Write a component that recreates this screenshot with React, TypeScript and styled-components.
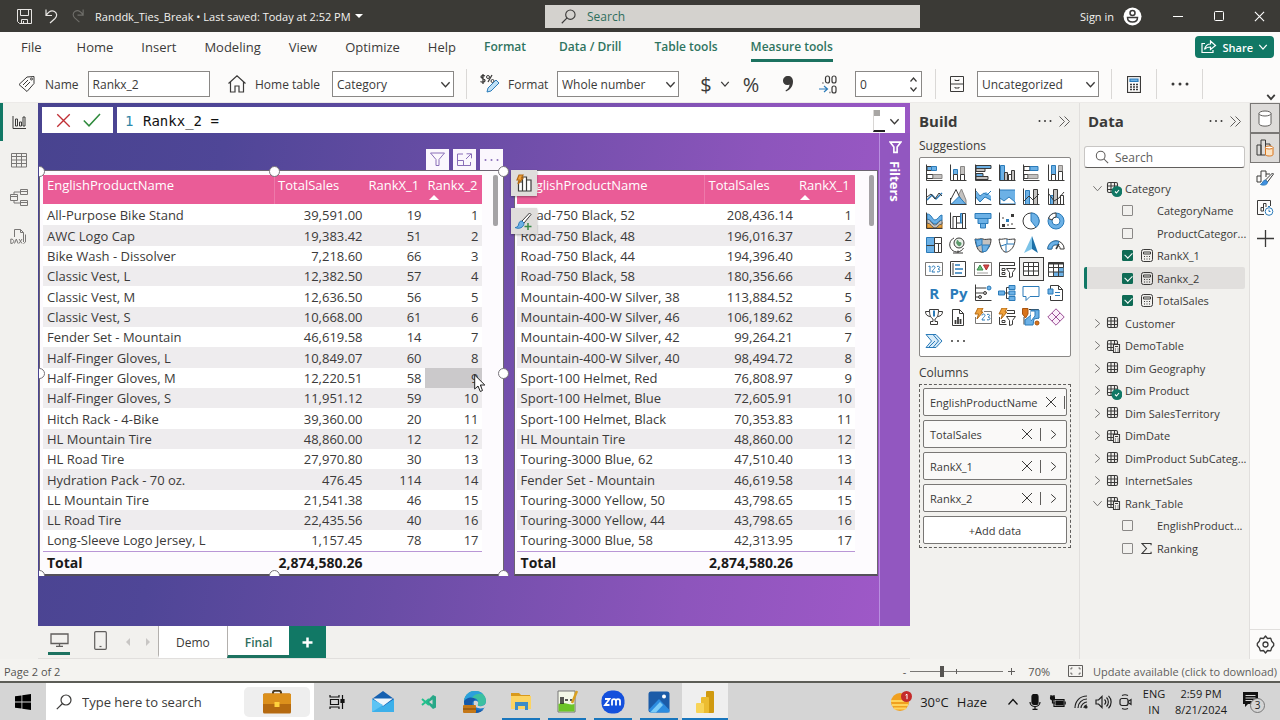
import React from "react";
import styled, { createGlobalStyle, css } from "styled-components";

const INK = "#3b3a39";
const BLUE = "#6cb1e6";
const DEEP = "#2b7bb9";
const GREY = "#c4c2c0";
const GREEN = "#117865";

const Global = createGlobalStyle`
  * { box-sizing: border-box; }
  body { margin: 0; background: #f2f1ee; font-family: "Open Sans", "Noto Sans", sans-serif; font-size: 12px; color: #3b3a39; }
  button, input, select { font: inherit; color: inherit; margin: 0; }
  button { border: 0; background: none; padding: 0; }
  svg { display: block; flex: none; }
`;

const Shell = styled.div`
  display: flex;
  flex-direction: column;
  min-height: 100vh;
  overflow: hidden;
`;

const Row = styled.div`
  display: flex;
  align-items: center;
`;

/* ---------- Title bar ---------- */

const TitleBar = styled.header`
  display: grid;
  grid-template-columns: 545fr 375fr 360fr;
  align-items: center;
  height: 32px;
  background: #3b3a36;
  color: #f3f2f0;
`;

const TitleLeft = styled(Row)`
  padding-left: 16px;
`;

const FileTitle = styled.span`
  margin-left: 9px;
  padding-top: 1px;
  font-size: 11px;
  white-space: nowrap;
`;

const TitleSearch = styled.label`
  display: flex;
  align-items: center;
  gap: 11px;
  height: 23px;
  padding-left: 16px;
  background: #d4d2ce;
  color: #2f6e5c;
  input {
    flex: 1;
    min-width: 0;
    border: 0;
    padding: 0;
    background: none;
    outline: 0;
    font-size: 12px;
  }
  input::placeholder { color: #2f6e5c; opacity: 1; }
`;

const TitleRight = styled(Row)`
  justify-content: flex-end;
`;

const SignIn = styled.button`
  display: flex;
  align-items: center;
  gap: 9px;
  margin-right: 15px;
  font-size: 11px;
`;

/* ---------- Ribbon ---------- */

const RibbonTabs = styled.nav`
  display: flex;
  align-items: center;
  height: 30px;
  padding: 0 6px 0 21px;
  background: #fcfbfa;
`;

const Tab = styled.a<{ $accent?: boolean; $active?: boolean }>`
  height: 30px;
  margin-right: ${(p) => (p.$accent ? 33 : 28)}px;
  padding-top: 6px;
  line-height: 18px;
  font-size: ${(p) => (p.$accent ? 12 : 13)}px;
  color: ${(p) => (p.$accent ? "#2f7460" : INK)};
  font-weight: ${(p) => (p.$accent ? 600 : 400)};
  text-decoration: none;
  white-space: nowrap;
  border-bottom: 3px solid ${(p) => (p.$active ? "#1c7260" : "transparent")};
  &:first-child { margin-right: 35px; }
`;

const ShareButton = styled.button`
  display: flex;
  align-items: center;
  gap: 5px;
  height: 22px;
  margin-left: auto;
  padding: 0 6px;
  border-radius: 4px;
  background: ${GREEN};
  color: #fff;
  font-weight: 600;
  font-size: 11px;
`;

const Ribbon = styled.div`
  display: flex;
  align-items: center;
  height: 41px;
  padding: 4px 4px 0 18px;
  background: #fcfbfa;
  border-bottom: 1px solid #eceae8;
`;

const Group = styled.div<{ $w: number; $indent?: number; $end?: number }>`
  display: flex;
  align-items: center;
  width: ${(p) => p.$w}px;
  padding: 0 ${(p) => p.$end ?? 0}px 0 ${(p) => p.$indent ?? 0}px;
  flex: none;
`;

const FieldLabel = styled.label`
  display: flex;
  align-items: center;
  gap: 9px;
  white-space: nowrap;
  flex: 1;
`;

const boxStyle = css`
  height: 26px;
  border: 1px solid #8a8886;
  border-radius: 0;
  background: #fff;
  padding: 0 4px;
  outline: 0;
`;

const TextBox = styled.input`
  ${boxStyle}
  width: 122px;
`;

const SelectWrap = styled.span`
  display: grid;
  align-items: center;
  width: 122px;
  flex: none;
  select, svg { grid-area: 1 / 1; }
  svg { justify-self: end; margin-right: 3px; pointer-events: none; }
`;

const Select = styled.select`
  ${boxStyle}
  width: 100%;
  appearance: none;
`;

const Spinner = styled.span`
  display: flex;
  align-items: center;
  ${boxStyle}
  width: 67px;
  input { width: 50px; border: 0; padding: 0; background: none; outline: 0; }
`;

const SpinArrows = styled.span`
  display: flex;
  flex-direction: column;
  gap: 5px;
`;

const Divider = styled.i`
  width: 1px;
  height: 30px;
  background: #dad8d6;
  flex: none;
`;

const IconButton = styled.button<{ $w?: number }>`
  display: flex;
  align-items: center;
  justify-content: center;
  width: ${(p) => p.$w ?? 24}px;
  height: 24px;
  flex: none;
`;

const Sign = styled(IconButton)`
  font-size: 20px;
`;

const RibbonToggle = styled.button`
  align-self: flex-end;
  margin-left: auto;
`;

/* ---------- Work area ---------- */

const Work = styled.main`
  display: flex;
  flex: 1;
`;

const ViewRail = styled.nav`
  width: 38px;
  flex: none;
  background: #f2f1ee;
`;

const ViewButton = styled.button<{ $active?: boolean }>`
  display: flex;
  align-items: center;
  justify-content: center;
  width: 38px;
  height: 38px;
  border-left: 3px solid ${(p) => (p.$active ? GREEN : "transparent")};
  border-right: 3px solid transparent;
`;

const Center = styled.section`
  display: flex;
  flex-direction: column;
  flex: 1;
  min-width: 0;
`;

const Stage = styled.div`
  display: flex;
  flex-direction: column;
  flex: 1;
  background: linear-gradient(100deg, #48438f 0%, #4f4697 20%, #6a4da6 46%, #8d55bc 76%, #a159c9 100%);
`;

const FormulaBar = styled.div`
  display: flex;
  gap: 4px;
  padding: 4px 5px 0 4px;
`;

const FormulaActions = styled.div`
  display: flex;
  align-items: center;
  justify-content: center;
  gap: 4px;
  width: 71px;
  height: 26px;
  background: #fff;
`;

const FormulaBox = styled.label`
  display: flex;
  align-items: center;
  flex: 1;
  height: 26px;
  padding: 2px 5px 0 8px;
  background: #fff;
  font-family: "DejaVu Sans Mono", "Liberation Mono", monospace;
  font-size: 14px;
  line-height: 24px;
  color: #111;
  input { flex: 1; height: 24px; line-height: 24px; border: 0; padding: 0; outline: 0; background: none; }
`;

const LineNo = styled.span`
  width: 18px;
  color: #2f87a8;
`;

const MiniMap = styled.span`
  display: flex;
  flex-direction: column;
  justify-content: space-between;
  width: 12px;
  height: 22px;
  margin-right: 4px;
  border-left: 1px solid #d8d6d4;
  border-bottom: 2px solid #222;
  &::before { content: ""; width: 6px; height: 6px; background: #a8a6a4; }
`;

const StageBody = styled.div`
  display: flex;
  flex: 1;
`;

const ReportPage = styled.div`
  display: grid;
  grid-template-columns: 464fr 364fr;
  column-gap: 10px;
  align-content: start;
  flex: 1;
  min-width: 0;
  padding: 0 1px;
`;

const FiltersPane = styled.aside`
  display: flex;
  flex-direction: column;
  align-items: center;
  gap: 7px;
  width: 31px;
  padding-top: 8px;
  border-left: 1px solid #b98fe0;
  background: #9257c0;
  color: #fff;
`;

const VerticalTitle = styled.span`
  writing-mode: vertical-rl;
  font-size: 13px;
  font-weight: 700;
  line-height: 18px;
`;

const VisualColumn = styled.div`
  display: flex;
  flex-direction: column;
  min-width: 0;
`;

const VisualHeader = styled.div`
  display: flex;
  align-items: flex-end;
  justify-content: flex-end;
  gap: 4px;
  height: 37px;
  padding: 0 1px 0 0;
`;

const HeaderButton = styled.button`
  display: flex;
  align-items: center;
  justify-content: center;
  width: 23px;
  height: 21px;
  background: #fbf7fd;
`;

const Visual = styled.div<{ $selected?: boolean }>`
  position: relative;
  display: flex;
  height: 406px;
  padding: 4px ${(p) => (p.$selected ? 5 : 3)}px 0 ${(p) => (p.$selected ? 3 : 2)}px;
  background: #fdfbfe;
  border: 1px solid #6b6470;
  border-bottom: 2px solid #55505a;
`;

const HandleClip = styled.div`
  position: absolute;
  left: -1px;
  right: -7px;
  top: -7px;
  bottom: -2px;
  overflow: hidden;
  pointer-events: none;
`;

const Handle = styled.i<{ $x: string; $y: string }>`
  position: absolute;
  left: ${(p) => p.$x};
  top: ${(p) => p.$y};
  width: 11px;
  height: 11px;
  margin: -5px 0 0 -5px;
  border: 1px solid #77737a;
  border-radius: 50%;
  background: #fff;
`;

const DataTable = styled.table`
  flex: 1;
  min-width: 0;
  border-collapse: collapse;
  table-layout: fixed;
  font-size: 13px;
  align-self: flex-start;
  th, td { padding: 0 3px; line-height: 20px; white-space: nowrap; text-align: right; font-weight: 400; }
  th:first-child, td:first-child { text-align: left; padding-left: 4px; }
  thead tr { height: 29px; background: #ea5c97; color: #fff; }
  thead th { position: relative; vertical-align: top; text-align: left; }
  thead th:nth-child(2) { border-left: 1px solid #ee79aa; }
  tbody tr { height: 20px; background: #fff; }
  tbody tr:first-child td { padding-top: 1px; }
  tbody tr:nth-child(3n + 2) { height: 21px; }
  tbody tr:nth-child(even) { background: #eeecee; }
  tfoot td { height: 24px; border-top: 1px solid #b996d6; font-size: 14px; font-weight: 700; color: #1b1a19; }
`;

const SortMark = styled.i`
  position: absolute;
  left: 4px;
  bottom: 4px;
  border: 5px solid transparent;
  border-top: 0;
  border-bottom-color: #fff;
`;

const Cell = styled.td<{ $hot?: boolean }>`
  ${(p) => p.$hot && css`background: #cbc9cb;`}
`;

const TableScroll = styled.div<{ $w: number }>`
  width: ${(p) => p.$w}px;
  display: flex;
  justify-content: flex-end;
  flex: none;
  &::before { content: ""; width: 5px; height: 51px; border-radius: 2px; background: #a5a3a6; }
`;

const Suggest = styled.div`
  position: absolute;
  left: -4px;
  top: -1px;
  display: flex;
  flex-direction: column;
  gap: 12px;
`;

const SuggestButton = styled.button`
  display: flex;
  align-items: center;
  justify-content: center;
  width: 26px;
  height: 26px;
  background: #dfdddb;
  box-shadow: 0 1px 2px #0005;
`;

const Pointer = styled.svg`
  position: absolute;
  left: 434px;
  top: 203px;
`;

/* ---------- Page tabs ---------- */

const PageTabs = styled.div`
  display: flex;
  height: 33px;
  background: #f2f1ee;
  border-bottom: 1px solid #e1dfdd;
`;

const Devices = styled.div`
  display: flex;
  align-items: flex-start;
  gap: 19px;
  padding: 2px 14px 0 10px;
`;

const Pager = styled.div`
  display: flex;
  align-items: center;
  gap: 14px;
  padding-right: 7px;
`;

const DeviceButton = styled.button<{ $active?: boolean }>`
  display: flex;
  align-items: center;
  justify-content: center;
  width: 22px;
  height: 27px;
  border-bottom: 3px solid ${(p) => (p.$active ? "#1c7260" : "transparent")};
`;

const PageTab = styled.button<{ $active?: boolean }>`
  height: 32px;
  padding: 4px 17px 0;
  background: #fff;
  border-left: 1px solid #b3b0ad;
  border-bottom: 3px solid ${(p) => (p.$active ? "#1c7260" : "#fff")};
  color: ${(p) => (p.$active ? "#2f6e5c" : INK)};
  font-weight: ${(p) => (p.$active ? 600 : 400)};
  font-size: 12px;
`;

const AddPage = styled.button`
  display: flex;
  align-items: center;
  justify-content: center;
  width: 37px;
  height: 32px;
  background: ${GREEN};
`;

/* ---------- Side panels ---------- */

const Panel = styled.aside<{ $pad: string }>`
  width: 170px;
  flex: none;
  padding: ${(p) => p.$pad};
  background: #f2f1ee;
  border-right: 1px solid #e1dfdd;
`;

const PanelHead = styled.div<{ $inset?: boolean }>`
  display: flex;
  align-items: center;
  gap: 5px;
  height: 36px;
  padding: ${(p) => (p.$inset ? "0 3px 0 4px" : "0")};
  h2 { flex: 1; margin: 0; font-size: 15px; font-weight: 700; }
`;

const SectionLabel = styled.h3<{ $spaced?: boolean }>`
  margin: ${(p) => (p.$spaced ? 9 : 0)}px 0 0;
  height: 18px;
  line-height: 14px;
  font-size: 12px;
  font-weight: 400;
`;

const Gallery = styled.div`
  display: grid;
  grid-template-columns: repeat(6, 1fr);
  grid-auto-rows: 24px;
  height: 200px;
  padding: 3px 2px;
  border: 1px solid #8a8886;
  border-radius: 2px;
  background: #fff;
`;

const GalleryButton = styled.button<{ $on?: boolean }>`
  display: flex;
  align-items: center;
  justify-content: center;
  outline: ${(p) => (p.$on ? "1px solid #3b3a39" : "0")};
  outline-offset: -1px;
  background: ${(p) => (p.$on ? "#f0efee" : "none")};
  font-size: 15px;
  font-weight: 700;
  color: ${DEEP};
`;

const Wells = styled.div`
  display: flex;
  flex-direction: column;
  gap: 4px;
  padding: 3px;
  border: 1px dashed #605e5c;
`;

const Well = styled.div`
  display: flex;
  align-items: center;
  gap: 7px;
  height: 28px;
  padding: 0 7px 0 6px;
  border: 1px solid #797775;
  border-radius: 2px;
  background: #faf9f8;
  overflow: hidden;
  font-size: 11px;
  span { flex: 1; white-space: nowrap; }
`;

const WellBar = styled.i`
  width: 1px;
  height: 13px;
  background: #605e5c;
  flex: none;
`;

const AddData = styled.button`
  height: 28px;
  border: 1px solid #797775;
  border-radius: 2px;
  background: #fff;
  font-size: 11px;
  font-weight: 500;
`;

const DataSearch = styled.label`
  display: flex;
  align-items: center;
  gap: 6px;
  height: 22px;
  margin: 7px 0 9px;
  padding: 0 10px;
  border: 1px solid #c8c6c4;
  border-bottom-color: #605e5c;
  border-radius: 3px;
  background: #fff;
  input { flex: 1; min-width: 0; padding: 0; border: 0; outline: 0; background: none; font-size: 12px; }
  input::placeholder { color: #605e5c; opacity: 1; }
`;

const Tree = styled.ul`
  margin: 0;
  padding: 0;
  list-style: none;
  font-size: 11px;
`;

const TreeItem = styled.li<{ $selected?: boolean }>`
  height: 22px;
  border-left: 3px solid ${(p) => (p.$selected ? GREEN : "transparent")};
  border-radius: 2px;
  background: ${(p) => (p.$selected ? "#e1dfdd" : "none")};
  &:nth-child(even) { height: 23px; }
`;

const TableNode = styled.button`
  display: flex;
  align-items: center;
  gap: 3px;
  height: 100%;
  padding-left: 5px;
  white-space: nowrap;
`;

const FieldNode = styled.label`
  display: grid;
  grid-template-columns: 19px 11px 1fr;
  align-items: center;
  height: 100%;
  padding-left: 35px;
  white-space: nowrap;
  span { margin-left: 5px; }
`;

const Check = styled.input`
  appearance: none;
  position: relative;
  width: 11px;
  height: 11px;
  border: 1px solid #8a8886;
  border-radius: 1px;
  &:checked { background: #0f6b55; border-color: #0f6b55; }
  &:checked::after {
    content: "";
    position: absolute;
    left: 2px;
    top: 1px;
    width: 6px;
    height: 4px;
    border: solid #fff;
    border-width: 0 0 1px 1px;
    transform: rotate(-45deg);
  }
`;

const PaneRail = styled.nav`
  display: flex;
  flex-direction: column;
  width: 30px;
  flex: none;
  background: #fcfbfa;
`;

const RailButton = styled.button<{ $on?: boolean; $last?: boolean }>`
  display: flex;
  align-items: center;
  justify-content: center;
  width: 30px;
  height: 30px;
  ${(p) => p.$on && css`background: #dddbd9; border: 1px solid #797775;`}
  ${(p) => p.$last && css`margin-top: auto; border-top: 1px solid #e1dfdd;`}
`;

/* ---------- Status bar ---------- */

const StatusBar = styled.footer`
  display: flex;
  align-items: center;
  height: 24px;
  padding: 2px 3px 0 4px;
  background: #f4f3f0;
  border-bottom: 2px solid #5c5d57;
  font-size: 11px;
  color: #555351;
`;

const Zoom = styled.div`
  display: flex;
  align-items: center;
  gap: 4px;
  margin-left: auto;
`;

const ZoomSlider = styled.input`
  appearance: none;
  width: 93px;
  height: 12px;
  background:
    linear-gradient(#605e5c, #605e5c) center / 1px 5px no-repeat,
    linear-gradient(#797775, #797775) center / 100% 1px no-repeat;
  &::-webkit-slider-thumb { appearance: none; width: 4px; height: 11px; background: #555351; }
`;

const UpdateLink = styled.a`
  margin-left: 10px;
  color: #605e5c;
  text-decoration: none;
`;

const ZoomValue = styled.span`
  margin: 0 18px 0 8px;
`;

/* ---------- Taskbar ---------- */

const Taskbar = styled.footer`
  display: flex;
  height: 37px;
  background: #d5d5d5;
  color: #1b1a19;
`;

const StartButton = styled.button`
  display: flex;
  align-items: center;
  justify-content: center;
  width: 46px;
`;

const TaskSearch = styled.label`
  display: flex;
  align-items: center;
  gap: 10px;
  width: 268px;
  padding: 0 4px 0 10px;
  background: #fff;
  input { flex: 1; min-width: 0; border: 0; padding: 0; outline: 0; font-size: 13px; background: none; }
  input::placeholder { color: #3b3a39; opacity: 1; }
`;

const Highlight = styled.span`
  display: flex;
  align-items: center;
  justify-content: center;
  width: 66px;
  height: 30px;
  border-radius: 5px;
  background: #eeeeee;
`;

const TaskButton = styled.button<{ $run?: boolean; $active?: boolean }>`
  display: flex;
  align-items: center;
  justify-content: center;
  width: 46px;
  background: ${(p) => (p.$active ? "#efefef" : "none")};
  background-clip: padding-box;
  border: solid transparent;
  border-width: 0 4px;
  box-shadow: ${(p) => (p.$run ? "inset 0 -2px #1976bd" : "none")};
  ${(p) => p.$active && css`border-width: 0;`}
`;

const Tray = styled.div`
  display: flex;
  align-items: center;
  margin-left: auto;
  padding-right: 14px;
`;

const Weather = styled.button`
  display: flex;
  align-items: center;
  gap: 8px;
  margin-right: 15px;
  font-size: 13px;
`;

const TrayText = styled.div<{ $w: number }>`
  width: ${(p) => p.$w}px;
  text-align: center;
  font-size: 11px;
  line-height: 16px;
  white-space: nowrap;
`;

const NoticeButton = styled.button`
  margin-left: 11px;
`;

/* ---------- Drawings ---------- */

type GlyphProps = { w?: number; h?: number; box?: string; color?: string; sw?: number; children: React.ReactNode };
const Glyph = ({ w = 18, h = w, box = "0 0 18 18", color = INK, sw = 1, children }: GlyphProps) => (
  <svg width={w} height={h} viewBox={box} fill="none" stroke={color} strokeWidth={sw} aria-hidden="true">
    {children}
  </svg>
);

const Chevron = ({ dir = "down", size = 12, color = INK, sw = 1.3 }: { dir?: "down" | "right" | "up"; size?: number; color?: string; sw?: number }) => (
  <Glyph w={size} box="0 0 12 12" color={color} sw={(sw * 12) / size}>
    <path d={{ down: "M1.5 3.5 6 8.500 10.500 3.500", right: "M3.500 1.500 8.500 6 3.500 10.500", up: "M1.500 8.500 6 3.500 10.500 8.500" }[dir]} />
  </Glyph>
);

const SpinChevron = ({ up }: { up?: boolean }) => (
  <Glyph w={7} h={5} box="0 0 7 5" sw={1.2}>
    <path d={up ? "M.5 4.500 3.500 1l3 3.500" : "M.5.500 3.500 4l3-3.500"} />
  </Glyph>
);

const DoubleChevron = () => (
  <Glyph w={13} box="0 0 13 13" color="#605e5c">
    <path d="M1.5 1.5 6.5 6.5 1.5 11.5M6.5 1.5l5 5-5 5" />
  </Glyph>
);

const Dots = ({ w = 15, color = INK, r = 1 }: { w?: number; color?: string; r?: number }) => (
  <Glyph w={w} h={4} box={`0 0 ${w} 4`} color="none">
    <g fill={color}>
      <circle cx={r + 0.5} cy="2" r={r} />
      <circle cx={w / 2} cy="2" r={r} />
      <circle cx={w - r - 0.5} cy="2" r={r} />
    </g>
  </Glyph>
);

const Cross = ({ size = 12, color = INK, sw = 1.2 }: { size?: number; color?: string; sw?: number }) => (
  <Glyph w={size} box="0 0 12 12" color={color} sw={sw}>
    <path d="m1 1 10 10M11 1 1 11" />
  </Glyph>
);

const Lens = ({ size = 15, color = INK, flip }: { size?: number; color?: string; flip?: boolean }) => (
  <Glyph w={size} box="0 0 16 16" color={color} sw={1.2}>
    {flip ? (
      <>
        <circle cx="6.5" cy="6.5" r="5" />
        <path d="m10 10 5 5" />
      </>
    ) : (
      <>
        <circle cx="10" cy="6" r="5" />
        <path d="M6.5 9.5.8 15.2" />
      </>
    )}
  </Glyph>
);

const axis = <path d="M1.5 .5v16H17.5" />;
const f = (d: string, fill: string, stroke: string = INK) => <path d={d} fill={fill} stroke={stroke} />;

const gallery: { name: string; draw: React.ReactNode; on?: boolean }[] = [
  { name: "Stacked bar chart", draw: <>{f("M2 2.5h4.500v4H2z", BLUE)}{f("M6.500 2.500h5v4h-5z", BLUE, DEEP)}{f("M2 10.500h6v4H2z", "#fff")}{f("M8 10.500h9v4H8z", GREY, "#8a8886")}{axis}</> },
  { name: "Stacked column chart", draw: <>{f("M4.500 5.500h4v5h-4z", BLUE, DEEP)}{f("M4.500 10.500h4v6h-4z", "#fff")}{f("M11.500 2.500h4v8h-4z", GREY, "#8a8886")}{f("M11.500 10.500h4v6h-4z", "#fff")}{axis}</> },
  { name: "Clustered bar chart", draw: <>{f("M2 1.500h15v3H2z", BLUE)}{f("M2 4.500h9v3H2z", GREY)}{f("M2 9.500h7v3H2z", BLUE)}{f("M2 12.500h12v3H2z", GREY)}{axis}</> },
  { name: "Clustered column chart", draw: <>{f("M2.500 1.500h4v15h-4z", BLUE, DEEP)}{f("M6.500 8.500h3v8h-3z", GREY)}{f("M10.500 10.500h3v6h-3z", "#fff")}{f("M13.500 6.500h3v10h-3z", GREY)}{axis}</> },
  { name: "100% stacked bar chart", draw: <>{f("M2 2.500h6v4H2z", "#fff")}{f("M8 2.500h8v4H8z", BLUE, DEEP)}{f("M2 10.500h4v4H2z", "#fff")}{f("M6 10.500h10v4H6z", GREY, "#8a8886")}{axis}</> },
  { name: "100% stacked column chart", draw: <>{f("M4.500 1.500h4v9h-4z", BLUE, DEEP)}{f("M4.500 10.500h4v6h-4z", "#fff")}{f("M11.500 1.500h4v6h-4z", GREY, "#8a8886")}{f("M11.500 7.500h4v9h-4z", "#fff")}{axis}</> },
  { name: "Line chart", draw: <>{axis}<path d="m2 12 5-5 4 4 6-6" stroke={DEEP} strokeWidth="1.500" /><path d="m2 9 4-3 4 5 4-6 3 3" /></> },
  { name: "Area chart", draw: <>{f("M8 10 12.500 1 17 12v4H8z", GREY, "#8a8886")}{f("M1.500 12 7 1.500 12 12v4H1.500z", "#fff")}{f("M2 16.500l8-8 7 8z", BLUE, DEEP)}<path d="M1.500 10v6.500h16" /></> },
  { name: "Stacked area chart", draw: <>{f("M2 4l4 4 6-4 5 4v8H2z", BLUE, "none")}{f("M2 10l4 4 5-5 6 4v3H2z", "#fff", "none")}<path d="m2 3 4 5 4-3 3 2 4-4" stroke={DEEP} /><path d="m2 9 4 5 5-5 6 3" stroke={DEEP} />{axis}</> },
  { name: "100% stacked area chart", draw: <>{f("M2 2h15v14H2z", BLUE, "none")}{f("M2 10l4 3 5-4 6 5v2H2z", "#fff", DEEP)}<path d="M2 2h15" stroke={DEEP} />{axis}</> },
  { name: "Line and stacked column chart", draw: <>{f("M3.500 2.500h4v14h-4z", BLUE, DEEP)}{f("M11.500 1.500h4v15h-4z", GREY)}<path d="m2 13 5-5 4 4 6-6" />{axis}</> },
  { name: "Line and clustered column chart", draw: <>{f("M3.500 7.500h3v9h-3z", BLUE, DEEP)}{f("M6.500 1.500h4v15h-4z", GREY)}{f("M13.500 7.500h3v9h-3z", "#fff")}<path d="m2 6 5 7 5-3 5-6" />{axis}</> },
  { name: "Ribbon chart", draw: <>{f("M2 8c4 0 5 6 8 6s4-4 7-4v6H2z", "#e8a33d", "#a86a1c")}{f("M2 7c4 0 5 6 8 6s4-5 7-5v4c-4 0-4 4-7 4S6 11 2 11z", GREY, "#605e5c")}{f("M2 2c5 0 5 6 8 6s4-5 7-5v5c-4 0-4 4-7 4S6 7 2 7z", BLUE, DEEP)}{axis}</> },
  { name: "Waterfall chart", draw: <>{f("M4 4.500h3.500v12H4z", "#fff")}{f("M7.500 4.500h4V11h-4z", "#fff")}{f("M11.500 1.500h2V11h-2z", BLUE, DEEP)}{f("M13.500 1.500h3v15h-3z", "#fff")}{axis}</> },
  { name: "Funnel chart", draw: <>{f("M1 1.500h16v5H1z", BLUE, DEEP)}{f("M4 6.500h10v5H4z", BLUE, DEEP)}{f("M6.500 11.500h5v4.500h-5z", BLUE, DEEP)}</> },
  { name: "Scatter chart", draw: <>{axis}<g stroke="none"><path d="M4 12h3v3H4zM13 2h3v3h-3z" fill={INK} /><path d="M8 7h3v3H8z" fill={DEEP} /><path d="M4 5h2v2H4zM13 11h2v2h-2zM9 12h2v2H9z" fill="#a19f9d" /></g></> },
  { name: "Pie chart", draw: <><circle cx="9" cy="9" r="8" fill="#fff" />{f("M9 1a8 8 0 0 1 5 14.300L9 9z", BLUE, DEEP)}</> },
  { name: "Donut chart", draw: <><circle cx="9" cy="9" r="6" stroke={BLUE} strokeWidth="4" /><circle cx="9" cy="9" r="8" stroke={DEEP} /><circle cx="9" cy="9" r="4" stroke={DEEP} /><path d="M9 1A8 8 0 0 0 1.500 6.500L5.200 8A4 4 0 0 1 9 5z" fill="#fff" /></> },
  { name: "Treemap", draw: <>{f("M1.500 1.500h8v15h-8z", BLUE, DEEP)}{f("M9.500 1.500h7v6h-7z", "#fff")}{f("M9.500 7.500h4v9h-4z", "#fff")}{f("M13.500 7.500h3v9h-3z", "#fff")}<path d="M1.500 9.500h8" /></> },
  { name: "Map", draw: <><circle cx="10" cy="7" r="5" fill="#e8efe9" /><path d="M8 4c2 0 1 2 3 2s2 3 0 4-3-2-4-3z" fill="#5c9a6c" stroke="none" /><path d="M5 2a7.300 7.300 0 1 0 9.500 10M9 14.500V17M4 17h10" /></> },
  { name: "Filled map", draw: <>{f("M1 3c3 1 6-1 8 0s4 0 8 0c0 4-1 6-2 8s-5 6-8 5-5-6-6-13z", GREY)}{f("M1.500 3.500c2 1 4 0 6.500-.5v5.500L3 10.500z", BLUE, DEEP)}{f("M8 9h7.500l-3 6-4 1z", BLUE, DEEP)}</> },
  { name: "Shape map", draw: <>{f("M1 3c3 1 6-1 8 0s4 0 8 0c0 4-1 6-2 8s-5 6-8 5-5-6-6-13z", "#fff")}<path d="M9 3v5l-6 2M9 8h7M8 9v7" stroke={DEEP} /></> },
  { name: "Azure map", draw: <>{f("M10 0 2 17l8-4z", "#7cc3e8", "none")}{f("M10 0l6 17-6-4z", "#1c70a8", "none")}</> },
  { name: "Gauge", draw: <>{f("M.8 13a8.200 8.200 0 0 1 16.400 0h-4a4 4 0 0 0-8.400 0z", "#fff")}{f("M.8 13A8.200 8.200 0 0 1 12 5.500L10.500 9A4 4 0 0 0 4.800 13z", BLUE, DEEP)}<path d="m9 13 3-5" strokeWidth="1.500" /></> },
  { name: "Card", draw: <><path d="M.5 2.500h17v13H.5z" stroke="#797775" /><path d="M3.500 6.500 5 6v6M7 7.500c0-2 3-2 3 0 0 1-3 3-3 4.500h3M12 6.500c3-1 3.500 2 1 2.500 3 .5 2.500 3.500-1 2.800" stroke={DEEP} /></> },
  { name: "Multi-row card", draw: <><path d="M1.500 1.500h15v15h-15z" /><path d="M6 5h5M6 9h8M6 13h7" stroke={DEEP} strokeWidth="1.500" /><path d="M4 3v12" /></> },
  { name: "KPI", draw: <><path d="M.5 2.500h17v13H.5z" stroke="#797775" /><path d="M3 10l3-5 3 5z" fill="#6cc07c" stroke="#3c8a4c" /><path d="M9.500 5h5.500l-2.700 5z" fill="#d84a4a" stroke="#a83232" /><path d="M3 13h11" stroke="#a19f9d" /></> },
  { name: "Slicer", draw: <><path d="M16.500 6V2.500H1.500v14h7M1.500 5.500h15" /><path d="M4 8.500h3v2H4zM4 12.500h3v2H4z" /><path d="M8.500 8.500h9l-3 4v4l-3 1v-5z" fill="#fff" /></> },
  { name: "Table", on: true, draw: <><path d="M1.500 2.500h15v13h-15z" fill="#fff" /><path d="M1.500 6.500h15M1.500 11h15M6.500 2.500v13M11.500 2.500v13" /></> },
  { name: "Matrix", draw: <>{f("M1.500 2.500h15v14h-15z", "#fff")}<path d="M11.500 7h5v9h-10v-4h5z" fill={BLUE} stroke="none" /><path d="M1.500 3.500h15" strokeWidth="2" /><path d="M1.500 7.500h15M1.500 12h15M6.500 3v13M11.500 3v13" /></> },
  { name: "R script visual", draw: "R" },
  { name: "Python visual", draw: "Py" },
  { name: "Key influencers", draw: <>{axis}<path d="M2 4h10M2 9h7M2 13h3" /><circle cx="15" cy="4" r="2" fill={BLUE} stroke={DEEP} /><circle cx="11" cy="9" r="1.500" fill={GREY} /><circle cx="6" cy="13" r="1.500" fill={GREY} /></> },
  { name: "Decomposition tree", draw: <><path d="M6 9h5M8.500 3.500v11M8.500 3.500H11M8.500 14.500H11" />{f("M.5 7h6v4h-6z", BLUE, DEEP)}{f("M11 1.500h6v4h-6zM11 7h6v4h-6zM11 12.500h6v4h-6z", BLUE, DEEP)}</> },
  { name: "Q&A", draw: <path d="M1 2.500h16v10H8l-4 4v-4H1z" stroke={DEEP} /> },
  { name: "Narrative", draw: <><path d="M3.500 5V1.500h8l4 4v11h-12V12M11.500 1.500v4h4" /><path d="M1 5h5v5H1z" fill={BLUE} stroke={DEEP} /><path d="M8 8.500h5M8 11.500h5" stroke={DEEP} /></> },
  { name: "Metrics", draw: <><path d="M4.500 1.500h9c0 6-1 8-3.500 9.500v2.500h2.500v3h-7v-3H8V11c-2.500-1.500-3.500-3.500-3.500-9.500zM4.500 3.500h-4c0 3 1.500 4.500 4.500 5M13.500 3.500h4c0 3-1.500 4.500-4.500 5" /><path d="M9 2.500v6" stroke={DEEP} strokeWidth="2" /></> },
  { name: "Paginated report", draw: <><path d="M3.500 1.500h7l4 4v12h-11zM10.500 1.500v4h4" /><path d="M6.500 16v-4M9 16V9M11.500 16v-5" strokeWidth="1.800" /></> },
  { name: "Card (new)", draw: <><path d="M1.500 9v6.500h16v-12H10" stroke="#797775" /><path d="M8 7.500c0-2 3-2 3 0 0 1-3 3-3 4.500h3M13 6.500c3-1 3.500 2 1 2.500 3 .5 2.500 3.500-1 2.800" stroke={DEEP} /><path d="M4 0h5L7 4h2l-6 7 1.500-5H1z" fill="#f0a23c" stroke="#b36a14" /></> },
  { name: "Slicer (new)", draw: <><path d="M16.500 6V2.500H9M1.500 9v7.500h7M9 5.500h7" /><path d="M4 12.500h3v2H4z" /><path d="M8.500 8.500h9l-3 4v4l-3 1v-5z" fill="#fff" /><path d="M4 0h5L7 4h2l-6 7 1.500-5H1z" fill="#f0a23c" stroke="#b36a14" /></> },
  { name: "ArcGIS map", draw: <><path d="M2 16.500V9M7 1.500h9.500v9" /><path d="M9 2v5l-6 5v5h8l1-6 5-1V2z" fill={BLUE} stroke={DEEP} /><path d="M.5.5h5.500V6l-2.500 4L.5 6z" fill="#d9741c" stroke="#a85410" /><circle cx="15" cy="15" r="2" fill="#d9741c" stroke="#a85410" /><path d="M9 3h4v5l-4 5" fill="#fff" stroke={DEEP} /></> },
  { name: "Power Apps", draw: <g stroke="#9b4f96" fill="#fbeefa"><path d="m9 .8 8.200 8.200L9 17.200.8 9z" /><path d="m5 5 8 8M13 5l-8 8" /></g> },
  { name: "Power Automate", draw: <g stroke={DEEP}><path d="M1 2.500h10l6 6.500-6 6.500H1L6.500 9z" fill="#d8ebf8" /><path d="m4 15 6-6M1 2.500h7L13.500 9 8 15.500" /></g> },
  { name: "More visuals", draw: <g fill={INK} stroke="none"><circle cx="3" cy="9" r="1" /><circle cx="9" cy="9" r="1" /><circle cx="15" cy="9" r="1" /></g> },
];

const TableIcon = ({ calc, badge }: { calc?: boolean; badge?: boolean }) => (
  <Glyph w={16} h={18} box="0 0 16 18" sw={1.1}>
    <rect x="1.500" y="3.500" width="10" height="10" rx="1.500" />
    <path d="M1.500 7h10M1.500 10.500h10M5 3.500v10M8.500 3.500v10" />
    {calc && <path d="M7.500 7.500h6v8h-6zM9 9.500h3M9 12h1M11.500 12h1M9 14h1M11.500 14h1" fill="#f2f1ee" />}
    {badge && (
      <>
        <circle cx="11" cy="12.500" r="5.500" fill={GREEN} stroke="none" />
        <path d="m9 12.500 1.500 1.500 2.500-3" stroke="#fff" />
      </>
    )}
  </Glyph>
);

const CalcIcon = () => (
  <Glyph w={12} h={13} box="0 0 12 13">
    <rect x=".5" y=".5" width="11" height="12" rx="2" />
    <path d="M2.500 3h7v2h-7zM3 7.500h1M5.500 7.500h1M8 7.500h1M3 10h1M5.500 10h1M8 10h1" />
  </Glyph>
);

const Sigma = () => (
  <Glyph w={11} h={13} box="0 0 12 13" sw={1.2}>
    <path d="M11 3V1H1l5 5.500L1 12h10v-2" />
  </Glyph>
);

/* ---------- Data ---------- */

const leftRows = [
  ["All-Purpose Bike Stand", "39,591.00", "19", "1"],
  ["AWC Logo Cap", "19,383.42", "51", "2"],
  ["Bike Wash - Dissolver", "7,218.60", "66", "3"],
  ["Classic Vest, L", "12,382.50", "57", "4"],
  ["Classic Vest, M", "12,636.50", "56", "5"],
  ["Classic Vest, S", "10,668.00", "61", "6"],
  ["Fender Set - Mountain", "46,619.58", "14", "7"],
  ["Half-Finger Gloves, L", "10,849.07", "60", "8"],
  ["Half-Finger Gloves, M", "12,220.51", "58", "9"],
  ["Half-Finger Gloves, S", "11,951.12", "59", "10"],
  ["Hitch Rack - 4-Bike", "39,360.00", "20", "11"],
  ["HL Mountain Tire", "48,860.00", "12", "12"],
  ["HL Road Tire", "27,970.80", "30", "13"],
  ["Hydration Pack - 70 oz.", "476.45", "114", "14"],
  ["LL Mountain Tire", "21,541.38", "46", "15"],
  ["LL Road Tire", "22,435.56", "40", "16"],
  ["Long-Sleeve Logo Jersey, L", "1,157.45", "78", "17"],
];

const rightRows = [
  ["Road-750 Black, 52", "208,436.14", "1"],
  ["Road-750 Black, 48", "196,016.37", "2"],
  ["Road-750 Black, 44", "194,396.40", "3"],
  ["Road-750 Black, 58", "180,356.66", "4"],
  ["Mountain-400-W Silver, 38", "113,884.52", "5"],
  ["Mountain-400-W Silver, 46", "106,189.62", "6"],
  ["Mountain-400-W Silver, 42", "99,264.21", "7"],
  ["Mountain-400-W Silver, 40", "98,494.72", "8"],
  ["Sport-100 Helmet, Red", "76,808.97", "9"],
  ["Sport-100 Helmet, Blue", "72,605.91", "10"],
  ["Sport-100 Helmet, Black", "70,353.83", "11"],
  ["HL Mountain Tire", "48,860.00", "12"],
  ["Touring-3000 Blue, 62", "47,510.40", "13"],
  ["Fender Set - Mountain", "46,619.58", "14"],
  ["Touring-3000 Yellow, 50", "43,798.65", "15"],
  ["Touring-3000 Yellow, 44", "43,798.65", "16"],
  ["Touring-3000 Blue, 58", "42,313.95", "17"],
];

type Node = { t: string; table?: boolean; open?: boolean; calc?: boolean; badge?: boolean; checked?: boolean; measure?: boolean; sum?: boolean; selected?: boolean };
const tree: Node[] = [
  { t: "Category", table: true, open: true, badge: true },
  { t: "CategoryName" },
  { t: "ProductCategor..." },
  { t: "RankX_1", checked: true, measure: true },
  { t: "Rankx_2", checked: true, measure: true, selected: true },
  { t: "TotalSales", checked: true, measure: true },
  { t: "Customer", table: true },
  { t: "DemoTable", table: true, calc: true },
  { t: "Dim Geography", table: true },
  { t: "Dim Product", table: true, badge: true },
  { t: "Dim SalesTerritory", table: true },
  { t: "DimDate", table: true, calc: true },
  { t: "DimProduct SubCateg...", table: true },
  { t: "InternetSales", table: true },
  { t: "Rank_Table", table: true, open: true, calc: true },
  { t: "EnglishProduct..." },
  { t: "Ranking", sum: true },
];

const handleSpots: [string, string][] = [
  ["0px", "7px"],
  ["50%", "7px"],
  ["calc(100% - 7px)", "7px"],
  ["0px", "calc(50% + 3px)"],
  ["calc(100% - 7px)", "calc(50% + 3px)"],
  ["0px", "calc(100% - 1px)"],
  ["50%", "calc(100% - 1px)"],
  ["calc(100% - 7px)", "calc(100% - 1px)"],
];

const SalesTable = ({ heads, widths, rows, hot }: { heads: string[]; widths: number[]; rows: string[][]; hot?: number }) => (
  <DataTable>
    <colgroup>
      <col />
      {widths.map((w, i) => (
        <col key={i} width={w} />
      ))}
    </colgroup>
    <thead>
      <tr>
        {heads.map((h, i) => (
          <th key={h} scope="col">
            {h}
            {i === heads.length - 1 && <SortMark />}
          </th>
        ))}
      </tr>
    </thead>
    <tbody>
      {rows.map((r, ri) => (
        <tr key={ri}>
          {r.map((c, ci) => (
            <Cell key={ci} $hot={hot === ri && ci === r.length - 1}>
              {c}
            </Cell>
          ))}
        </tr>
      ))}
    </tbody>
    <tfoot>
      <tr>
        <td>Total</td>
        <td>2,874,580.26</td>
        {widths.slice(1).map((_, i) => (
          <td key={i} />
        ))}
      </tr>
    </tfoot>
  </DataTable>
);

const DropDown = ({ id, value, label }: { id: string; value: string; label?: string }) => (
  <SelectWrap>
    <Select id={id} defaultValue={value} aria-label={label}>
      <option>{value}</option>
    </Select>
    <Chevron size={11} />
  </SelectWrap>
);

export default function App() {
  return (
    <Shell>
      <Global />
      <TitleBar>
        <TitleLeft>
          <IconButton $w={16} aria-label="Save">
            <Glyph w={15} box="0 0 15 15" color="#e8e6e4"><path d="M.5.5h14v14h-12l-2-2zM3.500.5v6h8v-6M4.500 14.500v-4h6v4M6.500 12v2" /></Glyph>
          </IconButton>
          <IconButton $w={38} aria-label="Undo">
            <Glyph w={15} box="0 0 15 15" color="#e8e6e4" sw={1.2}><path d="M2 .5v6h6M2 6.500C5 2 8 1 10.500 2.500s3 4.500.5 7L6 14" /></Glyph>
          </IconButton>
          <IconButton $w={16} aria-label="Redo">
            <Glyph w={14} box="0 0 15 15" color="#6f6e6a" sw={1.2}><path d="M13 .5v6H7M13 6.500C10 2 7 1 4.500 2.500s-3 4.500-.5 7L9 14" /></Glyph>
          </IconButton>
          <FileTitle>Randdk_Ties_Break • Last saved: Today at 2:52 PM</FileTitle>
          <Glyph w={14} h={6} box="-4 0 14 6" color="none"><path d="M0 1h8L4 5z" fill="#fff" /></Glyph>
        </TitleLeft>
        <TitleSearch>
          <Lens />
          <input placeholder="Search" aria-label="Search" />
        </TitleSearch>
        <TitleRight>
          <SignIn>
            Sign in
            <Glyph w={19} box="0 0 19 19" color={INK} sw={1.5}><circle cx="9.500" cy="9.500" r="9" fill="#fff" stroke="none" /><circle cx="9.500" cy="6" r="2.500" /><path d="M4.500 10.500h10c0 3-2 4.500-5 4.500s-5-1.500-5-4.500z" /></Glyph>
          </SignIn>
          <IconButton $w={41} aria-label="Minimize"><Glyph w={10} box="0 0 10 10" color="#fff"><path d="M0 5.500h10" /></Glyph></IconButton>
          <IconButton $w={41} aria-label="Maximize"><Glyph w={10} box="0 0 10 10" color="#fff"><rect x=".5" y=".5" width="9" height="9" rx="1" /></Glyph></IconButton>
          <IconButton $w={41} aria-label="Close"><Cross size={11} color="#fff" /></IconButton>
        </TitleRight>
      </TitleBar>

      <RibbonTabs>
        {["File", "Home", "Insert", "Modeling", "View", "Optimize", "Help"].map((t) => (
          <Tab key={t} href="#">{t}</Tab>
        ))}
        {["Format", "Data / Drill", "Table tools", "Measure tools"].map((t) => (
          <Tab key={t} href="#" $accent $active={t === "Measure tools"}>{t}</Tab>
        ))}
        <ShareButton>
          <Glyph w={16} h={14} box="0 0 16 14" color="#fff" sw={1.2}><path d="M4 3.500H1v9h11V10M3.500 9.500c1-4 3-5.500 6-5.500V1l5 4.500-5 4V7c-3 0-4.500.5-6 2.500z" /></Glyph>
          Share
          <Chevron size={10} color="#fff" />
        </ShareButton>
      </RibbonTabs>

      <Ribbon>
        <Group $w={193}>
          <FieldLabel>
            <Glyph w={18} box="0 0 18 18"><path d="m1 9.500 8-7.500 7-.5v7L9 16.500zM5 10l5-5M7 12l5-5" /><circle cx="13.500" cy="4" r="1" /></Glyph>
            Name
            <TextBox defaultValue="Rankx_2" />
          </FieldLabel>
        </Group>
        <Group $w={255} $indent={17} $end={12}>
          <FieldLabel htmlFor="home-table">
            <Glyph w={18} box="0 0 18 18" sw={1.2}><path d="M.5 8.500 9 .8l8.500 7.700M2.500 7v10h4.500v-6h4v6h4.500V7" /></Glyph>
            Home table
          </FieldLabel>
          <DropDown id="home-table" value="Category" />
        </Group>
        <Divider />
        <Group $w={212} $indent={13}>
          <FieldLabel htmlFor="format">
            <Glyph w={19} h={20} box="0 0 19 20"><path d="M5 2C3 1 1 1.500 1 3s4 1.500 4 3.500S2 8.500.5 7.500M3 0v10M8 8l4-7" strokeWidth="1.300" /><circle cx="8" cy="3" r="1.500" /><circle cx="12.500" cy="7" r="1.500" /><path d="m7 18 1-4 8-8 3 3-8 8z" fill="#bfe0f5" stroke={DEEP} /></Glyph>
            Format
          </FieldLabel>
          <DropDown id="format" value="Whole number" />
        </Group>
        <Group $w={176} $indent={16}>
          <Sign $w={22} aria-label="Currency">$</Sign>
          <IconButton $w={16} aria-label="Currency options"><Chevron size={10} /></IconButton>
          <Sign $w={36} aria-label="Percent">%</Sign>
          <IconButton $w={38} aria-label="Thousands separator">
            <Glyph w={10} h={16} box="0 0 10 16" color="none"><path d="M5 0c3 0 5 2 5 5.500 0 5-3 8.500-7 10l-.5-1C5 13 6.500 11 6.500 8.500 3 10 0 8 0 5c0-3 2-5 5-5z" fill={INK} /></Glyph>
          </IconButton>
          <IconButton $w={40} aria-label="Decimal places">
            <Glyph w={19} h={19} box="0 0 19 19" sw={1.2}><path d="M4.500 8h.9" strokeWidth="1.500" /><rect x="7.500" y="1" width="4" height="7" rx="2" /><rect x="14" y="1" width="4" height="7" rx="2" /><rect x="14" y="11" width="4" height="7" rx="2" /><path d="M11.500 17.500h.9" strokeWidth="1.500" /><path d="M1 14h8M6 11l3.500 3L6 17" stroke={DEEP} /></Glyph>
          </IconButton>
        </Group>
        <Group $w={80}>
          <Spinner>
            <input defaultValue="0" aria-label="Number of decimals" />
            <SpinArrows>
              <SpinChevron up />
              <SpinChevron />
            </SpinArrows>
          </Spinner>
        </Group>
        <Divider />
        <Group $w={175} $end={12}>
          <IconButton $w={41} aria-label="Data category">
            <Glyph w={14} h={16} box="0 0 14 16"><path d="M.5.5h13v15H.5zM.5 8h13M5 3.500v1h4v-1M5 11v1h4v-1" /></Glyph>
          </IconButton>
          <DropDown id="category" value="Uncategorized" label="Data category" />
        </Group>
        <Divider />
        <IconButton $w={44} aria-label="New measure">
          <Glyph w={14} h={17} box="0 0 14 17" sw={1.2}><rect x=".5" y=".5" width="13" height="16" /><path d="M3 3h8v2.500H3z" fill={BLUE} stroke={DEEP} /><path d="M3 8.500h2M6 8.500h2M9 8.500h2M3 11h2M6 11h2M9 11h2M3 13.500h2M6 13.500h2M9 13.500h2" strokeWidth="1.500" /></Glyph>
        </IconButton>
        <Divider />
        <IconButton $w={45} aria-label="More options"><Dots w={18} r={1.5} /></IconButton>
        <Divider />
        <RibbonToggle aria-label="Collapse ribbon"><Chevron size={10} sw={1.8} /></RibbonToggle>
      </Ribbon>

      <Work>
        <ViewRail>
          <ViewButton $active aria-label="Report view">
            <Glyph w={14} box="0 0 14 14"><path d="M1 1v12.500h13M3.500 4v7h2V4zM7.500 7v4h2V7zM11 2v9h2V2z" /></Glyph>
          </ViewButton>
          <ViewButton aria-label="Table view">
            <Glyph w={16} h={15} box="0 0 16 15" color="#797775"><path d="M.5.5h15v13.500H.5zM.5 3.500h15M.5 7h15M.5 10.500h15M5.500.5v13.500M10.500.5v13.500" /></Glyph>
          </ViewButton>
          <ViewButton aria-label="Model view">
            <Glyph w={18} box="0 0 18 18" color="#797775"><path d="M10.500.5h7v5h-7zM10.500 11.500h7v5h-7zM.5 5.500h7v6h-7zM10.500 2.500h7M10.500 13.500h7M.5 7.500h7M4 5.500V3h6.500M4 11.500V14h6.500" /></Glyph>
          </ViewButton>
          <ViewButton aria-label="DAX query view">
            <Glyph w={18} h={17} box="0 0 18 17" color="#797775"><path d="M4.500 9V1.500h6l3 3V14M10.500 1.500v3h3M15.500 6.500V14l-2 1.500" /><path d="M.8 11v4.500c4 0 4-4.500 0-4.500zM4.500 15.500l1.800-4.500 1.800 4.500M9 11l3 4.500M12 11l-3 4.500" /></Glyph>
          </ViewButton>
        </ViewRail>

        <Center>
          <Stage>
            <FormulaBar>
              <FormulaActions>
                <IconButton aria-label="Cancel"><Cross size={15} color="#c02f35" sw={1.1} /></IconButton>
                <IconButton aria-label="Commit"><Glyph w={18} h={14} box="0 0 18 14" color="#2f8a3c" sw={1.5}><path d="M.8 7.500 6 12.800 17 1" /></Glyph></IconButton>
              </FormulaActions>
              <FormulaBox>
                <LineNo>1</LineNo>
                <input defaultValue="Rankx_2 =" aria-label="Formula" />
                <MiniMap />
                <Chevron size={11} />
              </FormulaBox>
            </FormulaBar>
            <StageBody>
              <ReportPage>
                <VisualColumn>
                  <VisualHeader>
                    <HeaderButton aria-label="Filters on this visual"><Glyph w={15} box="0 0 15 15" color="#8a6fb8"><path d="M.5 1h14L9 7.500v6H6v-6z" /></Glyph></HeaderButton>
                    <HeaderButton aria-label="Focus mode"><Glyph w={15} h={13} box="0 0 15 13" color="#8a6fb8"><path d="M6 1H.5v11.500h13V9M.5 7.500h6v5M9.500.8h5v4.500M14 1 9 6" /></Glyph></HeaderButton>
                    <HeaderButton aria-label="More options"><Dots color="#8a6fb8" /></HeaderButton>
                  </VisualHeader>
                  <Visual $selected>
                    <SalesTable heads={["EnglishProductName", "TotalSales", "RankX_1", "Rankx_2"]} widths={[91, 59, 57]} rows={leftRows} hot={8} />
                    <TableScroll $w={16} />
                    <HandleClip>
                      {handleSpots.map(([x, y]) => (
                        <Handle key={x + y} $x={x} $y={y} />
                      ))}
                    </HandleClip>
                    <Pointer width="12" height="19" viewBox="0 0 12 19" aria-hidden="true">
                      <path d="M.7 1v14l3.300-3 2.300 5.500 2.200-1L6.300 11h4.500z" fill="#fff" stroke="#222" />
                    </Pointer>
                  </Visual>
                </VisualColumn>
                <VisualColumn>
                  <VisualHeader />
                  <Visual>
                    <SalesTable heads={["EnglishProductName", "TotalSales", "RankX_1"]} widths={[91, 59]} rows={rightRows} />
                    <TableScroll $w={19} />
                    <Suggest>
                      <SuggestButton aria-label="Change visual type">
                        <Glyph w={18} box="0 0 18 18" sw={1.2}><path d="M3.500 8h4v9h-4zM7.500 3h4v14h-4zM11.500 6h4.500v11h-4.500z" fill="#fff" /><path d="M4 1h4L6.500 4H8l-5 6 1.200-4H2z" fill="#f0a23c" stroke="#b36a14" /></Glyph>
                      </SuggestButton>
                      <SuggestButton aria-label="Format visual">
                        <Glyph w={19} box="0 0 19 19"><path d="M15.500 1 8 9l2 2 7-8.500z" fill="#fff" /><path d="M8 9c-3 0-3 2-3.500 4S2 15.500 1 15.500c4 2 9 0 9-4.500z" fill={BLUE} stroke={DEEP} /><path d="M14 11v7M10.500 14.500h7" stroke="#3c8a4c" strokeWidth="1.500" /></Glyph>
                      </SuggestButton>
                    </Suggest>
                  </Visual>
                </VisualColumn>
              </ReportPage>
              <FiltersPane>
                <Glyph w={13} h={13} box="0 0 12 12" color="#fff" sw={1.5}><path d="M1 1h10L7.500 5.500v5h-3v-5z" /></Glyph>
                <VerticalTitle>Filters</VerticalTitle>
              </FiltersPane>
            </StageBody>
          </Stage>
          <PageTabs>
            <Devices>
              <DeviceButton $active aria-label="Desktop layout"><Glyph w={19} h={14} box="0 0 19 14" color="#605e5c" sw={1.3}><path d="M1 1h17v9.500H1zM9.500 10.500V13M6 13.300h7" /></Glyph></DeviceButton>
              <DeviceButton aria-label="Mobile layout"><Glyph w={13} h={19} box="0 0 13 19" color="#605e5c" sw={1.2}><rect x=".7" y=".7" width="11.600" height="17.600" rx="1" /><path d="M5.500 15.500h2" /></Glyph></DeviceButton>
            </Devices>
            <Pager>
              <Glyph w={6} h={8} box="0 0 6 8" color="none"><path d="M5 0v8L1 4z" fill="#c8c6c4" /></Glyph>
              <Glyph w={6} h={8} box="0 0 6 8" color="none"><path d="M1 0v8l4-4z" fill="#c8c6c4" /></Glyph>
            </Pager>
            <PageTab>Demo</PageTab>
            <PageTab $active>Final</PageTab>
            <AddPage aria-label="New page"><Glyph w={11} box="0 0 11 11" color="#fff" sw={2.5}><path d="M5.500.5v10M.5 5.500h10" /></Glyph></AddPage>
          </PageTabs>
        </Center>

        <Panel $pad="0 8px 0 9px">
          <PanelHead>
            <h2>Build</h2>
            <IconButton $w={16} aria-label="More options"><Dots w={14} /></IconButton>
            <button aria-label="Collapse"><DoubleChevron /></button>
          </PanelHead>
          <SectionLabel>Suggestions</SectionLabel>
          <Gallery>
            {gallery.map((g) => (
              <GalleryButton key={g.name} aria-label={g.name} title={g.name} $on={g.on}>
                {typeof g.draw === "string" ? g.draw : <Glyph>{g.draw}</Glyph>}
              </GalleryButton>
            ))}
          </Gallery>
          <SectionLabel $spaced>Columns</SectionLabel>
          <Wells>
            {["EnglishProductName", "TotalSales", "RankX_1", "Rankx_2"].map((n, i) => (
              <Well key={n}>
                <span>{n}</span>
                <button aria-label={`Remove ${n}`}><Cross size={12} sw={1} /></button>
                <WellBar />
                {i > 0 && <button aria-label={`${n} options`}><Chevron dir="right" size={11} sw={1} /></button>}
              </Well>
            ))}
            <AddData>+Add data</AddData>
          </Wells>
        </Panel>

        <Panel $pad="0 4px">
          <PanelHead $inset>
            <h2>Data</h2>
            <IconButton $w={16} aria-label="More options"><Dots w={14} /></IconButton>
            <button aria-label="Collapse"><DoubleChevron /></button>
          </PanelHead>
          <DataSearch>
            <Lens size={14} flip color="#605e5c" />
            <input placeholder="Search" aria-label="Search fields" />
          </DataSearch>
          <Tree>
            {tree.map((n) => (
              <TreeItem key={n.t} $selected={n.selected}>
                {n.table ? (
                  <TableNode>
                    <Chevron dir={n.open ? "down" : "right"} size={11} color="#797775" sw={1} />
                    <TableIcon calc={n.calc} badge={n.badge} />
                    <span>{n.t}</span>
                  </TableNode>
                ) : (
                  <FieldNode>
                    <Check type="checkbox" defaultChecked={n.checked} />
                    {n.measure ? <CalcIcon /> : n.sum ? <Sigma /> : <i />}
                    <span>{n.t}</span>
                  </FieldNode>
                )}
              </TreeItem>
            ))}
          </Tree>
        </Panel>

        <PaneRail>
          <RailButton $on aria-label="Data pane"><Glyph w={14} h={17} box="0 0 14 17" color="#605e5c"><path d="M1 3.500v10c0 3.500 12 3.500 12 0v-10" fill="#fff" /><ellipse cx="7" cy="3.500" rx="6" ry="2.500" fill="#fff" /></Glyph></RailButton>
          <RailButton $on aria-label="Build pane"><Glyph w={18} box="0 0 18 18"><path d="M1 6h4v10H1zM5 1h4.500v15H5zM9.500 5H14v3" /><path d="M9.500 8.500v7c0 2 7.500 2 7.500 0v-7" fill="#fbe3c4" stroke="#d9741c" /><ellipse cx="13.200" cy="8.500" rx="3.800" ry="1.500" fill="#fff" stroke="#d9741c" /></Glyph></RailButton>
          <RailButton aria-label="Format pane"><Glyph w={18} box="0 0 18 18"><path d="M5 13H1V7h4M5 13V2h5v6M10 5h4" /><path d="m16.500 4-7 7 2 2 6-8z" fill="#fff" /><path d="M9.500 11c-3 0-2 3-5 4.500 4 1.500 7 0 7-2.500z" fill="#3f8fe0" stroke={DEEP} /></Glyph></RailButton>
          <RailButton aria-label="Performance analyzer"><Glyph w={18} box="0 0 18 18"><path d="M8 15.500H1.500v-14h13V7M5 12V8.500h2.500V12zM7.500 12V4.500H10V8" /><circle cx="13" cy="12.500" r="3.800" fill="#fff" stroke={DEEP} /><path d="M13 10.500v2h1.500M12 7.500h2" stroke={DEEP} /></Glyph></RailButton>
          <RailButton aria-label="Add pane"><Glyph w={17} box="0 0 17 17" sw={1.3}><path d="M8.500 0v17M0 8.500h17" /></Glyph></RailButton>
          <RailButton $last aria-label="Settings"><Glyph w={19} box="0 0 19 19" sw={1.3}><path d="m9.500 1 2 2.500 3.200-.3 1 3 2 2.300v2l-2 2.300-1 3-3.200-.3-2 2.500-2-2.500-3.200.3-1-3-2-2.300v-2l2-2.300 1-3 3.200.3z" strokeLinejoin="round" /><circle cx="9.500" cy="9.500" r="2.500" /></Glyph></RailButton>
        </PaneRail>
      </Work>

      <StatusBar>
        <span>Page 2 of 2</span>
        <Zoom>
          <button aria-label="Zoom out">-</button>
          <ZoomSlider type="range" min={0} max={100} defaultValue={33} aria-label="Zoom" />
          <button aria-label="Zoom in"><Glyph w={9} box="0 0 9 9" color="#605e5c"><path d="M4.500 1v7M1 4.500h7" /></Glyph></button>
          <ZoomValue>70%</ZoomValue>
        </Zoom>
        <button aria-label="Fit to page"><Glyph w={15} h={12} box="0 0 15 12" color="#605e5c"><path d="M.5.5h14v11H.5zM3 4.500V3h1.500M10.500 3H12v1.500M12 7.500V9h-1.500M4.500 9H3V7.500" /></Glyph></button>
        <UpdateLink href="#">Update available (click to download)</UpdateLink>
      </StatusBar>

      <Taskbar>
        <StartButton aria-label="Start"><Glyph w={16} box="0 0 16 16" color="none"><path d="M0 2.300 6.500 1.400v6.200H0zM7.300 1.300 16 0v7.600H7.300zM0 8.400h6.500v6.200L0 13.700zM7.300 8.400H16V16l-8.700-1.300z" fill="#000" /></Glyph></StartButton>
        <TaskSearch>
          <Lens size={16} />
          <input placeholder="Type here to search" aria-label="Type here to search" />
          <Highlight>
            <Glyph w={30} h={24} box="0 0 30 24" color="none"><path d="M11 4V2.500A2 2 0 0 1 13 .8h4a2 2 0 0 1 2 1.700V4" stroke="#4a3a20" strokeWidth="2" /><rect x="1" y="3.500" width="28" height="20" rx="1.500" fill="#b56a10" /><path d="M1 5a1.500 1.500 0 0 1 1.500-1.500h25A1.500 1.500 0 0 1 29 5v9H1z" fill="#dc901c" /><rect x="12.500" y="12" width="5" height="5" fill="#ffd23c" /></Glyph>
          </Highlight>
        </TaskSearch>
        <TaskButton aria-label="Task view"><Glyph w={16} box="0 0 16 16" color="#111" sw={1.2}><path d="M1 1v2h9V1M1 15v-2h9v2M1.500 5.500h8v5h-8zM13.500 1v14" /><path d="M12 5.500h3v3h-3z" fill="#111" /></Glyph></TaskButton>
        <TaskButton aria-label="Mail"><Glyph w={24} h={22} box="0 0 24 22" color="none"><path d="M1 8 12 0l11 8v13H1z" fill="#1560b0" /><path d="M2 7.500h20L12 15z" fill="#eef6fc" /><path d="M1 8l11 7.500L23 8v13H1z" fill="#3cb0ea" /><path d="M1 8v13L12 14z" fill="#5cc4f4" /></Glyph></TaskButton>
        <TaskButton aria-label="Code"><Glyph w={18} h={16} box="0 0 18 16" color="none"><path d="M13 1l3 1.500v11L13 15 6 8z" fill="#28a888" /><path d="M12.500 5.500v5L9 8z" fill="#d5d5d5" /><path d="M2 5l7 6M2 11l7-6" stroke="#22c08c" strokeWidth="2" /></Glyph></TaskButton>
        <TaskButton aria-label="Edge"><Glyph w={24} h={24} box="0 0 24 24" color="none"><circle cx="12" cy="12" r="11" fill="#1c78c8" /><path d="M1 11C2 4 7 1 12 1c7 0 11 5 11 10 0 4-3 5-6 5-2 0-3-1-2-2 1-3-1-6-5-6-4 0-7 1-9 3z" fill="#3cc0a0" /><path d="M1 11C2 4 7 1 12 1c3 0 6 1 8 3-5-1-9 0-11 4-3 0-6 1-8 3z" fill="#2ca0dc" /><path d="M1 11c3-4 9-5 12-1-4 0-5 4-3 7s7 5 11 2c-3 4-9 5-13 3S1 16 1 11z" fill="#1558a8" /><path d="M11 11c3-1 5 1 4 3s1 2.500 4 2c2-.5 4-1.500 4-4v5c-2 1-5 2-8 1-4-1-5-4-4-7z" fill="#d5d5d5" /><rect x="0" y="15" width="13" height="8" rx="1" fill="#c47818" /><path d="M0 19h13" stroke="#7a4408" /></Glyph></TaskButton>
        <TaskButton $run aria-label="File Explorer"><Glyph w={21} h={19} box="0 0 21 19" color="none"><path d="M0 1h8l2 2h9v4H0z" fill="#d99a1c" /><path d="M0 4h20v13H0z" fill="#fcd462" /><path d="M4 18v-8h13v8h-3v-4H7v4z" fill="#3c8cc8" /></Glyph></TaskButton>
        <TaskButton $run aria-label="Notepad++"><Glyph w={21} h={23} box="0 0 21 23" color="none"><path d="M1 1h17v21H1z" fill="#f4f8e8" stroke="#777" /><path d="M1.500 14c6-3 11 2 16 0v7.500h-16z" fill="#6cc428" /><path d="M4 7v7M6 7v7M8 10h3M13 10h2" stroke="#222" strokeWidth="1.500" /><path d="m20 1-5 12" stroke="#d9a020" strokeWidth="2.500" /></Glyph></TaskButton>
        <TaskButton $run aria-label="Zoom"><Glyph w={24} box="0 0 24 24" color="none"><rect x=".5" y=".5" width="23" height="23" rx="10" fill="#1450dc" /><path d="M4 9h4.500L4 15h4.500M11 15.500V11c0-2.500 4-2.500 4 0v4.500M15 11c0-2.500 4-2.500 4 0v4.500" stroke="#fff" strokeWidth="1.800" /></Glyph></TaskButton>
        <TaskButton $run aria-label="Photos"><Glyph w={22} box="0 0 22 22" color="none"><rect x=".5" y=".5" width="21" height="21" rx="2.500" fill="#1c5ca8" /><path d="M.5 19 11 8l10.500 11v2.500H3z" fill="#2c8ce0" /><path d="M2 21.500 12 11l3 3-7 7.500z" fill="#7cccf8" /><circle cx="16" cy="5.500" r="2" fill="#fff" /></Glyph></TaskButton>
        <TaskButton $run $active aria-label="Power BI"><Glyph w={20} h={24} box="0 0 20 24" color="none"><rect x="11" y="1" width="8" height="22" rx="1" fill="#d09a10" /><rect x="6" y="7" width="8" height="16" rx="1" fill="#ecbc30" /><rect x="1" y="13" width="8" height="10" rx="1" fill="#f8d458" /></Glyph></TaskButton>
        <Tray>
          <Weather>
            <Glyph w={22} box="0 0 22 22" color="none"><circle cx="10" cy="11" r="9" fill="#f0a020" /><path d="M1 10h18M2 14h16M4 17.500h12" stroke="#ffd45c" strokeWidth="1.800" /><circle cx="16.500" cy="5.500" r="5.500" fill="#c42b2b" /><path d="M15.500 4.200 17 3.200v5" stroke="#fff" /></Glyph>
            <span>30°C</span>
            <span>Haze</span>
          </Weather>
          <IconButton $w={22} aria-label="Hidden icons"><Chevron dir="up" size={12} color="#111" /></IconButton>
          <IconButton $w={22} aria-label="Microphone"><Glyph w={12} h={16} box="0 0 12 16" color="#111" sw={1.2}><rect x="3" y=".5" width="6" height="10" rx="2" fill="#111" /><path d="M1 8c0 6 10 6 10 0M6 12.500V15M3.500 15.300h5" /></Glyph></IconButton>
          <IconButton $w={23} aria-label="Battery"><Glyph w={17} h={13} box="0 0 17 13" color="#111" sw={1.2}><path d="M5 4.500h10v7H5z" /><path d="M7 6h7v4H7z" fill="#111" /><path d="M16.200 6.500v3" /><circle cx="3.500" cy="3" r="2" fill="#111" /><path d="M3.500 5v3H6M2 0v2M5 0v2" /></Glyph></IconButton>
          <IconButton $w={23} aria-label="Wi-Fi"><Glyph w={14} box="0 0 14 14" color="#222" sw={1.2}><path d="M1 13C1 6 6 1 13 1M4 13c0-5 4-9 9-9M7 13c0-3 3-6 6-6M10 13c0-1.500 1.500-3 3-3" /><circle cx="12" cy="12" r="1" fill="#111" /></Glyph></IconButton>
          <IconButton $w={22} aria-label="Volume"><Glyph w={17} h={14} box="0 0 17 14" color="#222" sw={1.2}><path d="M1 5h2.500L7 1.500v11L3.500 9H1zM9.500 4.500c1.500 1.500 1.500 3.500 0 5M11.500 2.500c2.500 2.500 2.500 6.500 0 9M13.500.8c3.500 3.500 3.500 9 0 12.400" /></Glyph></IconButton>
          <IconButton $w={23} aria-label="Meet now"><Glyph w={13} h={16} box="0 0 13 16" color="#222" sw={1.2}><rect x="1" y="4.500" width="8" height="7" rx="2" /><path d="m9 7.500 3-2v5l-3-2M3 1.500c2-1 4-1 6 0M3 14.500c2 1 4 1 6 0" /></Glyph></IconButton>
          <TrayText $w={34}>ENG<br />IN</TrayText>
          <TrayText $w={60}>2:59 PM<br />8/21/2024</TrayText>
          <NoticeButton aria-label="Notifications">
            <svg width="24" height="22" viewBox="0 0 24 22" aria-hidden="true">
              <path d="M1 1h15v12H6l-3 3v-3H1z" fill="#111" />
              <path d="M3.500 4.500h10M3.500 7h10M3.500 9.500h7" stroke="#d5d5d5" />
              <circle cx="15.500" cy="14.500" r="7" fill="#d5d5d5" stroke="#777" />
              <text x="15.500" y="18" fontSize="10" textAnchor="middle" fill="#222">3</text>
            </svg>
          </NoticeButton>
        </Tray>
      </Taskbar>
    </Shell>
  );
}
